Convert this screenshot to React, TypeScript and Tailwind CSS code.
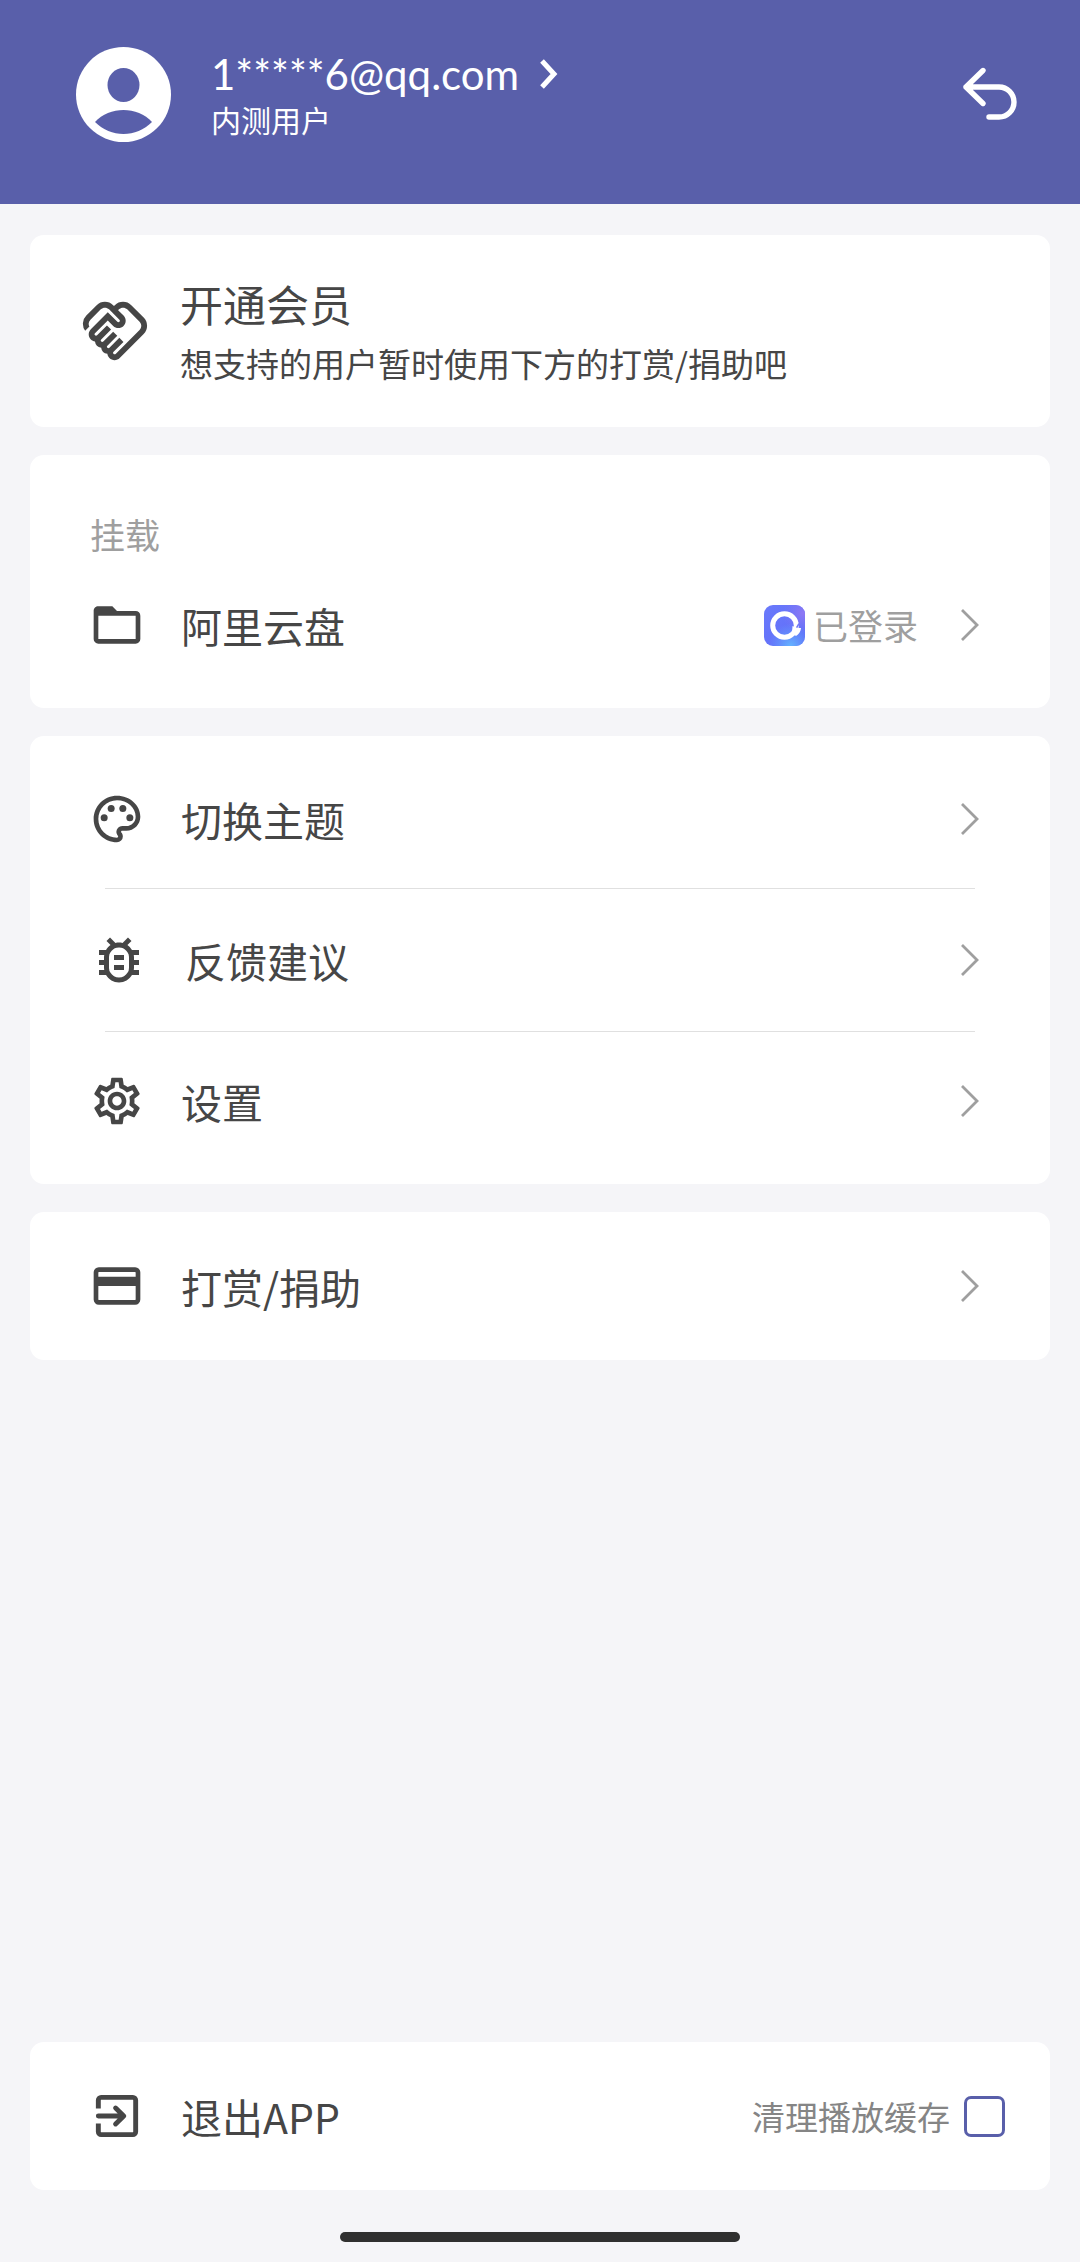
import React, { useState } from "react";
import {
  MdOutlineBugReport,
  MdOutlineHandshake,
  MdOutlinePalette,
  MdOutlineSettings,
} from "react-icons/md";

interface RowProps {
  icon: React.ReactNode;
  label: string;
  children?: React.ReactNode;
}

const Card: React.FC<{ className?: string; children: React.ReactNode }> = ({ className = "", children }) => (
  <section className={`rounded-[14px] bg-white ${className}`}>{children}</section>
);

const Chevron = () => (
  <svg className="mr-10 h-9 w-5 shrink-0 text-[#9f9f9f]" viewBox="0 0 20 36" fill="none" aria-hidden="true">
    <path d="M2 3 17 18 2 33" stroke="currentColor" strokeWidth="2.8" />
  </svg>
);

const FolderIcon = () => (
  <svg className="size-14" viewBox="0 0 24 24" fill="currentColor" aria-hidden="true">
    <path d="M20 18H4V8h16m0-2h-8l-2-2H4c-1.11 0-2 .89-2 2v12a2 2 0 0 0 2 2h16a2 2 0 0 0 2-2V8a2 2 0 0 0-2-2Z" />
  </svg>
);

const CardIcon = () => (
  <svg className="size-14" viewBox="0 0 24 24" fill="none" aria-hidden="true">
    <rect x="3" y="5" width="18" height="14" rx="1.2" stroke="currentColor" strokeWidth="2" />
    <path d="M3 8h18v4H3z" fill="currentColor" />
  </svg>
);

const ExitIcon = () => (
  <svg className="size-14" viewBox="0 0 24 24" fill="none" stroke="currentColor" strokeWidth="2.1" aria-hidden="true">
    <path d="M4 8.8V5.2A1.2 1.2 0 0 1 5.2 4h13.6A1.2 1.2 0 0 1 20 5.2v13.6a1.2 1.2 0 0 1-1.2 1.2H5.2A1.2 1.2 0 0 1 4 18.8v-3.6" />
    <path d="M4 12h10.5M11.4 8.6l3.5 3.4-3.5 3.4" strokeLinecap="round" strokeLinejoin="round" />
  </svg>
);

const DriveLogo = () => (
  <svg className="size-[41px]" viewBox="0 0 41 41" aria-hidden="true">
    <defs>
      <linearGradient id="drive-base" x1="0" y1="0" x2="1" y2="1">
        <stop offset="0" stopColor="#6a7afb" />
        <stop offset="1" stopColor="#5f6cf8" />
      </linearGradient>
      <radialGradient id="drive-glow" cx="0.65" cy="1" r="0.55">
        <stop offset="0" stopColor="#64b4ff" />
        <stop offset="1" stopColor="#64a0ff" stopOpacity="0" />
      </radialGradient>
      <radialGradient id="drive-tint" cx="0.95" cy="0.2" r="0.5">
        <stop offset="0" stopColor="#8f78f4" />
        <stop offset="1" stopColor="#7f78f4" stopOpacity="0" />
      </radialGradient>
    </defs>
    <rect width="41" height="41" rx="9" fill="url(#drive-base)" />
    <rect width="41" height="41" rx="9" fill="url(#drive-tint)" />
    <rect width="41" height="41" rx="9" fill="url(#drive-glow)" />
    <circle cx="20.5" cy="20.5" r="11.8" fill="none" stroke="#fff" strokeWidth="5" />
    <path d="m28.500 21 4 2L37 23c-.5 4-2 6-5 8l-4-3Z" fill="#fff" />
    <path d="m32.6 22.600 2.400-4" stroke="#7078f6" strokeWidth="1.6" />
  </svg>
);

const Row: React.FC<RowProps> = ({ icon, label, children }) => (
  <button type="button" className="flex w-full items-center gap-9 py-[41px] pr-[30px] pl-[59px] text-left">
    <span className="shrink-0">{icon}</span>
    <span className="flex-1 text-[41px] leading-[52px]">{label}</span>
    {children}
    <Chevron />
  </button>
);

const Divider = () => <hr className="mx-[75px] border-t border-[#e0e0e0]" />;

export default function App() {
  const [clearCache, setClearCache] = useState(false);

  return (
    <div className="flex min-h-screen flex-col bg-[#f5f5f8] font-['Noto_Sans_CJK_SC',sans-serif] text-[#464646]">
      <header className="flex items-start justify-between bg-[#595faa] pt-[47px] pr-[63px] pb-[62px] pl-[76px] text-white">
        <button type="button" className="flex items-start gap-10 text-left">
          <svg className="size-[95px] shrink-0" viewBox="0 0 95 95" aria-hidden="true">
            <circle cx="47.5" cy="47.5" r="47.5" fill="#fff" />
            <ellipse cx="47.5" cy="38" rx="16" ry="17" fill="#595faa" />
            <path d="M19 75c7-8 18-12 28.5-12S69 67 76 75c-8 8-18 12-28.5 12S27 83 19 75Z" fill="#595faa" />
          </svg>
          <span className="flex flex-col">
            <span className="flex items-center gap-5">
              <span className="font-[Lato,'Noto_Sans_CJK_SC',sans-serif] text-[42px] leading-[54px]">
                1*****6@qq.com
              </span>
              <svg className="h-8 w-5" viewBox="0 0 20 32" fill="none" aria-hidden="true">
                <path d="M3 3 15 16 3 29" stroke="currentColor" strokeWidth="5" />
              </svg>
            </span>
            <span className="text-[30px] leading-9">内测用户</span>
          </span>
        </button>
        <button type="button" aria-label="返回" className="mt-[19px]">
          <svg className="size-14" viewBox="0 0 56 56" fill="none" aria-hidden="true">
            <path
              d="M22 4.5 5 21l17 16.5M5 21h33a15 15 0 0 1 0 30H28"
              stroke="currentColor"
              strokeWidth="5.4"
              strokeLinecap="round"
              strokeLinejoin="round"
            />
          </svg>
        </button>
      </header>

      <main className="flex flex-1 flex-col gap-7 px-[30px] pt-[31px]">
        <Card>
          <button type="button" className="flex w-full items-center gap-[30px] py-[38px] pl-[50px] text-left">
            <MdOutlineHandshake className="size-[70px] shrink-0" />
            <span className="flex flex-col gap-1">
              <span className="text-[43px] leading-[60px]">开通会员</span>
              <span className="text-[33px] leading-[52px]">想支持的用户暂时使用下方的打赏/捐助吧</span>
            </span>
          </button>
        </Card>

        <Card className="pt-[57px] pb-[14px]">
          <h2 className="pl-[60px] text-[35px] leading-[44px] text-[#9f9f9f]">挂载</h2>
          <Row icon={<FolderIcon />} label="阿里云盘">
            <span className="mr-1.5 flex items-center gap-2 text-[35px] leading-[44px] text-[#9f9f9f]">
              <DriveLogo />
              已登录
            </span>
          </Row>
        </Card>

        <Card className="py-[14px]">
          <Row icon={<MdOutlinePalette className="size-14" />} label="切换主题" />
          <Divider />
          <Row icon={<MdOutlineBugReport className="size-[60px]" />} label="反馈建议" />
          <Divider />
          <Row icon={<MdOutlineSettings className="size-14" />} label="设置" />
        </Card>

        <Card className="py-[5px]">
          <Row icon={<CardIcon />} label="打赏/捐助" />
        </Card>

        <Card className="mt-auto flex items-center justify-between py-[46px] pr-[45px] pl-[59px]">
          <button type="button" className="flex items-center gap-9">
            <ExitIcon />
            <span className="text-[41px] leading-[52px]">退出APP</span>
          </button>
          <label className="flex items-center gap-[14px] text-[33px] leading-[44px] text-[#858585]">
            清理播放缓存
            <input
              type="checkbox"
              checked={clearCache}
              onChange={(e) => setClearCache(e.target.checked)}
              className="size-[41px] appearance-none rounded-[7px] border-3 border-[#595faa] checked:bg-[#595faa]"
            />
          </label>
        </Card>
      </main>

      <footer className="flex justify-center pt-[42px] pb-5">
        <div className="h-[10px] w-[37%] rounded-full bg-[#303030]" />
      </footer>
    </div>
  );
}
